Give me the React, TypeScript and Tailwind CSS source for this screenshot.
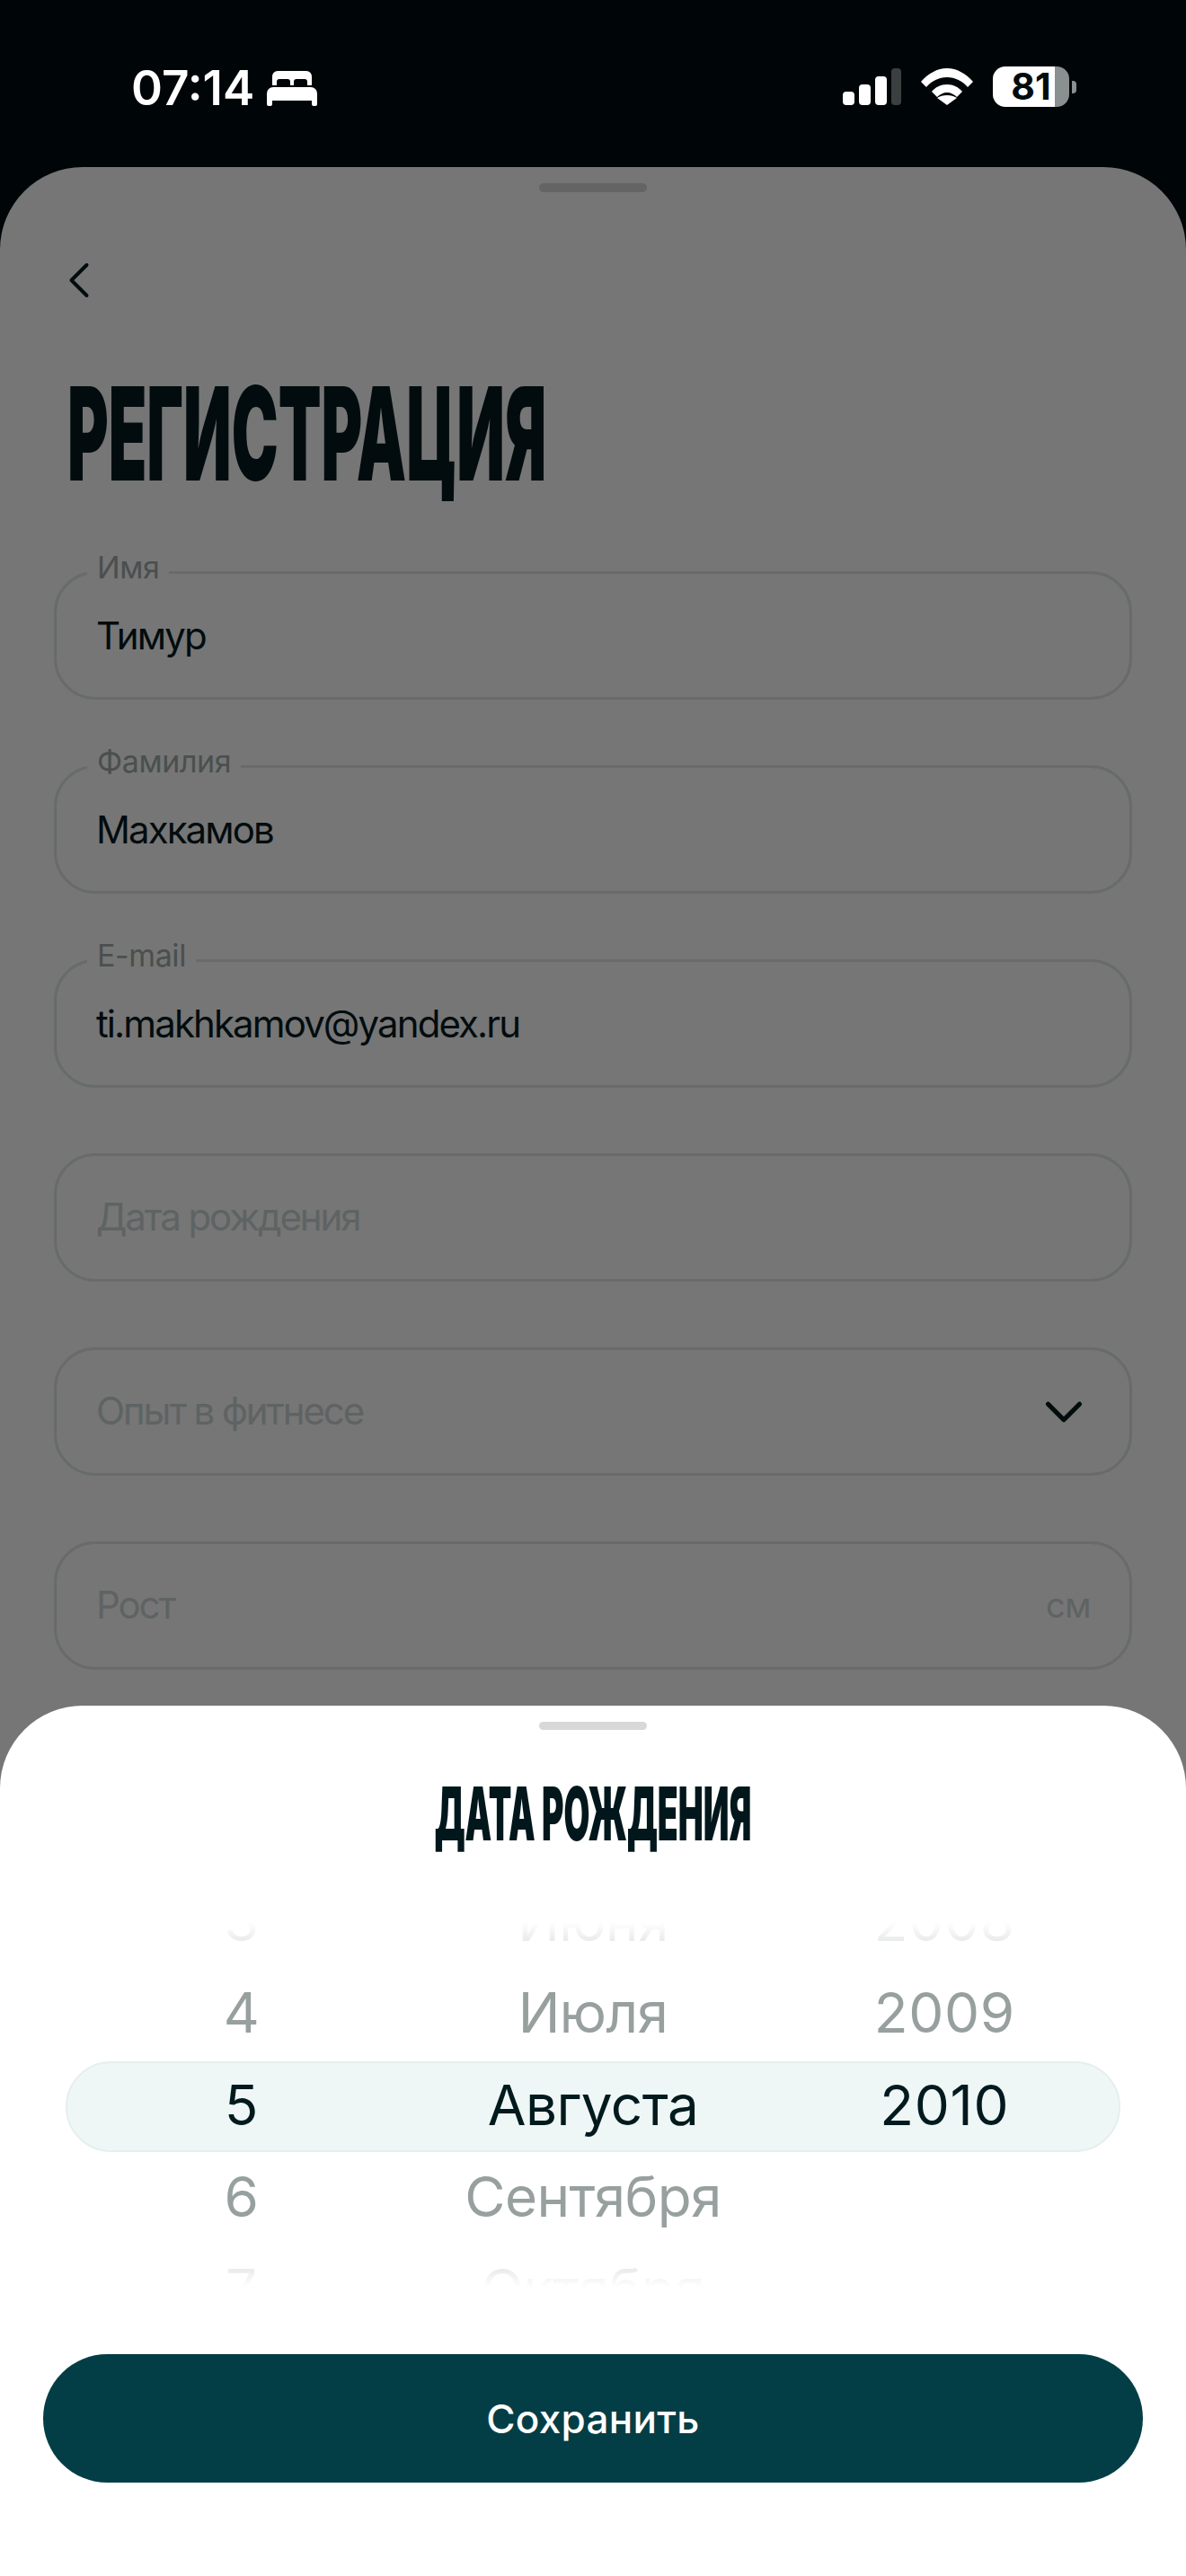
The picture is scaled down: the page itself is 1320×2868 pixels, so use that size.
import { ChevronDown, ChevronLeft } from "lucide-react";

type FieldProps = {
  label?: string;
  value?: string;
  placeholder?: string;
  suffix?: React.ReactNode;
};

const fields: FieldProps[] = [
  { label: "Имя", value: "Тимур" },
  { label: "Фамилия", value: "Махкамов" },
  { label: "E-mail", value: "ti.makhkamov@yandex.ru" },
  { placeholder: "Дата рождения" },
  {
    placeholder: "Опыт в фитнесе",
    suffix: <ChevronDown className="-mr-[5px] h-[70px] w-[70px] text-[#020c0e]" strokeWidth={1.8} />,
  },
  {
    placeholder: "Рост",
    suffix: <span className="text-[38px] tracking-[-0.5px] text-[#5e6363]">см</span>,
  },
];

const days = ["3", "4", "5", "6", "7"];
const months = ["Июня", "Июля", "Августа", "Сентября", "Октября"];
const years = ["2008", "2009", "2010", "", ""];

function StatusBar() {
  return (
    <div className="flex h-[186px] items-start justify-between pl-[146px] pr-[122px] pt-[74px] text-white">
      <div className="flex items-center gap-[14px]">
        <span className="text-[53px] font-semibold leading-[48px]">07:14</span>
        <svg width="56" height="40" viewBox="0 0 56 40" fill="white">
          <path d="M6 17V7a6 6 0 0 1 6-6h32a6 6 0 0 1 6 6v10h-5v-4a3 3 0 0 0-3-3h-9a3 3 0 0 0-3 3v4h-4v-4a3 3 0 0 0-3-3h-9a3 3 0 0 0-3 3v4z" />
          <path d="M7 19h42a7 7 0 0 1 7 7v12a2 2 0 0 1-2 2h-2a2 2 0 0 1-2-2v-4H6v4a2 2 0 0 1-2 2H2a2 2 0 0 1-2-2V26a7 7 0 0 1 7-7z" />
        </svg>
      </div>
      <div className="flex items-start gap-[22px]">
        <div className="mt-[2px] flex h-[41px] items-end gap-[5px]">
          <div className="h-[15px] w-[13px] rounded-[4px] bg-white" />
          <div className="h-[23px] w-[13px] rounded-[4px] bg-white" />
          <div className="h-[32px] w-[13px] rounded-[4px] bg-white" />
          <div className="h-[41px] w-[11px] rounded-[4px] bg-[#3a3f3f]" />
        </div>
        <svg className="mt-[2px]" width="58" height="41" viewBox="0 0 58 41" fill="white">
          <path d="M0 15C8 6 18 0 29 0s21 6 29 15l-6 6c-6-7-14-11-23-11S12 14 6 21z" />
          <path d="M12 26c4-5 10-8 17-8s13 3 17 8l-6 6c-3-3-7-5-11-5s-8 2-11 5z" />
          <path d="M18 33c3-2 7-3 11-3s8 1 11 3L29 41z" />
        </svg>
        <div className="flex items-center gap-[3px]">
          <div className="flex h-[45px] w-[85px] items-center justify-center rounded-[14px] bg-[linear-gradient(to_right,#ffffff_81%,#8a8f8f_81%)] text-[41px] font-bold leading-[45px] text-[#020c0e]">
            81
          </div>
          <div className="h-[14px] w-[5px] rounded-r-[4px] bg-[#8a8f8f]" />
        </div>
      </div>
    </div>
  );
}

function Field({ label, value, placeholder, suffix }: FieldProps) {
  return (
    <div className="relative flex h-[143px] items-center justify-between rounded-[46px] border-[3px] border-[#686b6b] pl-[44px] pr-[43px]">
      {label && (
        <span className="absolute left-[34px] top-[-29px] h-[40px] bg-[#767676] px-[11px] text-[34px] leading-[44px] tracking-[-0.4px] text-[#4a4f4f]">
          {label}
        </span>
      )}
      {value ? (
        <span className="text-[42px] tracking-[-1.9px] text-[#020c0e]">{value}</span>
      ) : (
        <span className="-mt-[3px] text-[42px] tracking-[-2.1px] text-[#5e6363]">{placeholder}</span>
      )}
      {suffix}
    </div>
  );
}

function FormSheet() {
  return (
    <div className="h-[2682px] rounded-t-[92px] bg-[#767676] pt-[18px]">
      <div className="mx-auto h-[10px] w-[120px] rounded-full bg-[#646464]" />
      <ChevronLeft className="ml-[54px] mt-[64px] h-[68px] w-[68px] text-[#020c0e]" strokeWidth={1.4} />
      <h1 className="ml-[75px] mt-[64px] origin-left scale-x-[0.48] whitespace-nowrap text-[145px] font-black leading-[145px] text-[#020c0e]">
        РЕГИСТРАЦИЯ
      </h1>
      <div className="mt-[81px] flex flex-col gap-[73px] pl-[60px] pr-[60px]">
        {fields.map((field, index) => (
          <Field key={index} {...field} />
        ))}
      </div>
    </div>
  );
}

function WheelColumn({ items, className }: { items: string[]; className?: string }) {
  return (
    <div className={`flex flex-col items-center ${className ?? ""}`}>
      {items.map((item, index) => (
        <div
          key={index}
          className={`flex h-[102.5px] items-center text-[62px] ${index === 2 ? "text-[#001a1e]" : "text-[#97a09f]"}`}
        >
          {item}
        </div>
      ))}
    </div>
  );
}

function DateSheet() {
  return (
    <div className="absolute bottom-0 left-0 right-0 h-[969px] rounded-t-[92px] bg-white pt-[18px]">
      <div className="mx-auto h-[9px] w-[120px] rounded-full bg-[#d8d8d8]" />
      <h2 className="mt-[54px] origin-center scale-x-[0.455] whitespace-nowrap text-center text-[82px] font-black leading-[80px] text-[#02171b]">
        ДАТА РОЖДЕНИЯ
      </h2>
      <div className="relative mt-[80px] h-[407px] overflow-hidden">
        <div className="absolute left-[73px] right-[73px] top-[155px] h-[101px] rounded-full border-2 border-[#e6eeee] bg-[#eff6f6]" />
        <div className="relative mt-[-53px] grid grid-cols-3 px-[73px]">
          <WheelColumn items={days} />
          <WheelColumn items={months} className="tracking-[-0.6px]" />
          <WheelColumn items={years} className="tracking-[0.7px]" />
        </div>
        <div className="absolute left-0 right-0 top-0 h-[60px] bg-gradient-to-b from-white to-white/40" />
        <div className="absolute bottom-0 left-0 right-0 h-[60px] bg-gradient-to-t from-white to-white/40" />
      </div>
      <div className="mt-[74px] px-[48px]">
        <button className="h-[143px] w-full rounded-full bg-[#033e46] text-[44px] font-medium tracking-[0.3px] text-white">
          Сохранить
        </button>
      </div>
    </div>
  );
}

export default function App() {
  return (
    <div className="relative h-[2868px] w-[1320px] overflow-hidden bg-[#000508] font-['Inter',sans-serif]">
      <StatusBar />
      <FormSheet />
      <DateSheet />
    </div>
  );
}
